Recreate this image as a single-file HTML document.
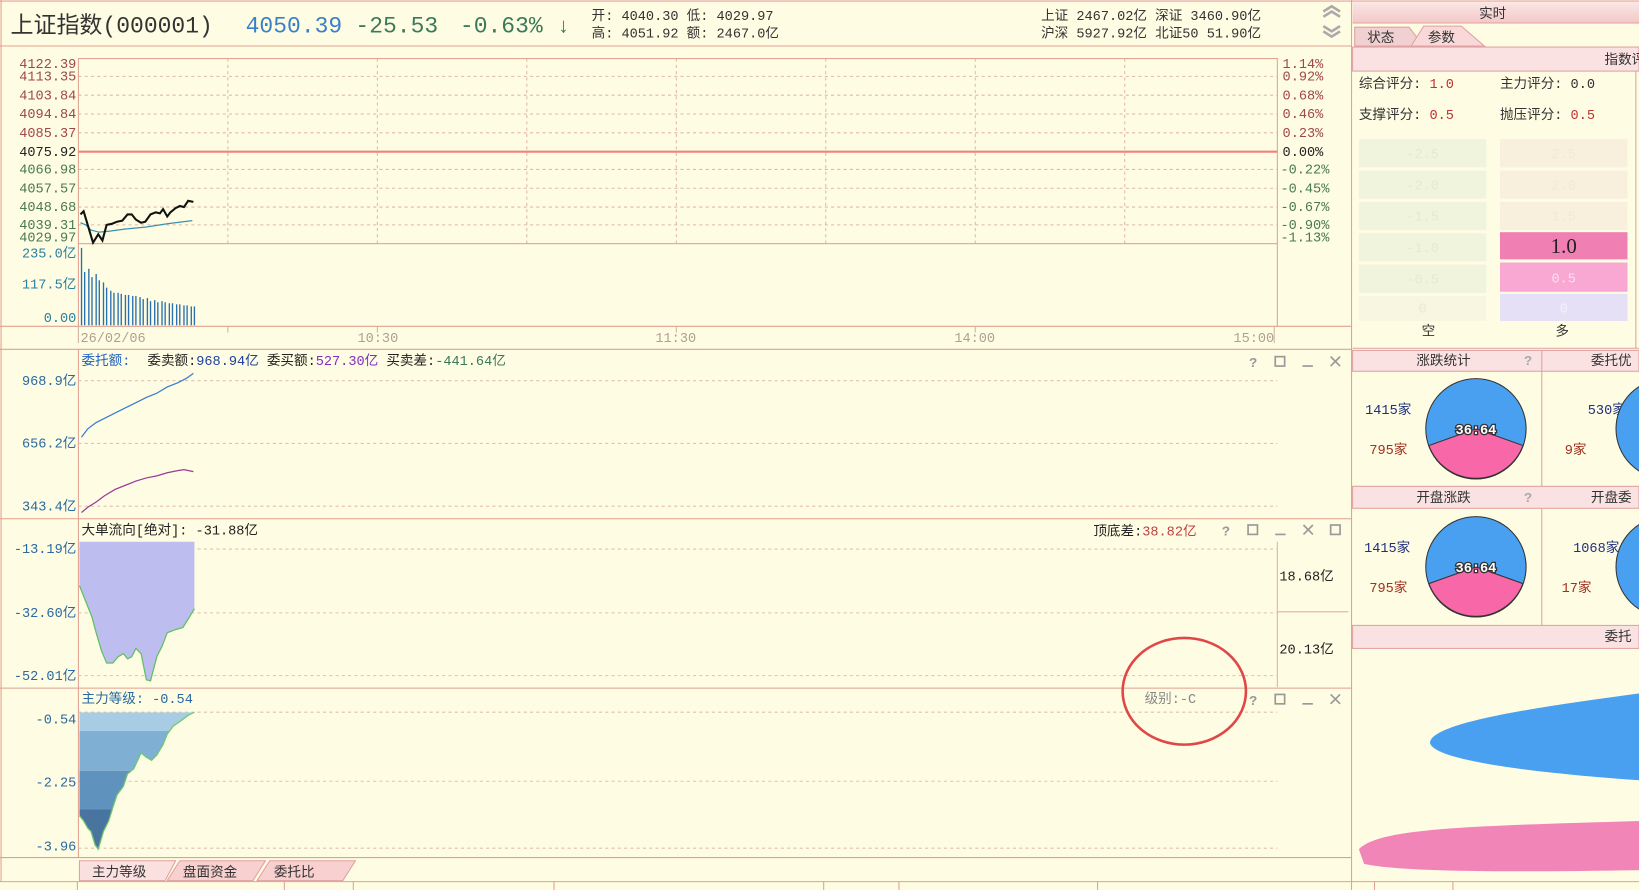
<!DOCTYPE html>
<html><head><meta charset="utf-8"><style>
html,body{margin:0;padding:0;background:#fefde3;overflow:hidden}
svg{display:block}
text{font-family:"Liberation Mono","Noto Sans CJK SC",monospace;font-size:13px}
.cn{font-family:"Liberation Mono","Noto Sans CJK SC",monospace}
</style></head><body>
<svg width="1639" height="890" viewBox="0 0 1568 851" preserveAspectRatio="none" xmlns="http://www.w3.org/2000/svg">
<rect width="1568" height="851" fill="#fefde3"/>
<defs>
<linearGradient id="pk" x1="0" y1="0" x2="0" y2="1"><stop offset="0" stop-color="#fbe6e6"/><stop offset="1" stop-color="#f3c8c8"/></linearGradient>
</defs>
<line x1="0" y1="1" x2="1568" y2="1" stroke="#e8a0a0"/>
<line x1="0" y1="44" x2="1293" y2="44" stroke="#e0a090"/>
<text x="10" y="31" class="cn" style="font-size:22px" fill="#333">上证指数(000001)</text>
<text x="235" y="31" style="font-size:22px" fill="#3a80c8">4050.39</text>
<text x="340" y="31" style="font-size:22px" fill="#3a7a5a">-25.53</text>
<text x="440" y="31" style="font-size:22px" fill="#3a7a5a">-0.63%</text>
<text x="533" y="31" style="font-size:20px" fill="#3a7a5a">↓</text>
<text x="566" y="19" class="cn" fill="#333">开: 4040.30  低: 4029.97</text>
<text x="566" y="36" class="cn" fill="#333">高: 4051.92  额: 2467.0亿</text>
<text x="996" y="19" class="cn" fill="#333">上证 2467.02亿  深证 3460.90亿</text>
<text x="996" y="36" class="cn" fill="#333">沪深 5927.92亿  北证50 51.90亿</text>
<path d="M1266 11l8-5 8 5M1266 16l8-5 8 5" stroke="#aaa" stroke-width="2.5" fill="none"/>
<path d="M1266 25l8 5 8-5M1266 30l8 5 8-5" stroke="#aaa" stroke-width="2.5" fill="none"/>
<line x1="1" y1="0" x2="1" y2="843" stroke="#e0a090"/>
<line x1="1293" y1="0" x2="1293" y2="851" stroke="#e0a090"/>
<g stroke="#e0b8a8" stroke-dasharray="3,3" stroke-width="1">
<line x1="75" y1="73" x2="1222" y2="73"/><line x1="75" y1="91" x2="1222" y2="91"/><line x1="75" y1="109" x2="1222" y2="109"/><line x1="75" y1="127" x2="1222" y2="127"/><line x1="75" y1="162" x2="1222" y2="162"/><line x1="75" y1="180" x2="1222" y2="180"/><line x1="75" y1="198" x2="1222" y2="198"/><line x1="75" y1="215" x2="1222" y2="215"/>
<line x1="218" y1="56" x2="218" y2="233"/><line x1="361" y1="56" x2="361" y2="233"/><line x1="504" y1="56" x2="504" y2="233"/><line x1="647" y1="56" x2="647" y2="233"/><line x1="790" y1="56" x2="790" y2="233"/><line x1="933" y1="56" x2="933" y2="233"/><line x1="1076" y1="56" x2="1076" y2="233"/>
</g>
<rect x="75" y="56" width="1147" height="177" fill="none" stroke="#e0a090"/>
<line x1="75" y1="145" x2="1222" y2="145" stroke="#f08080" stroke-width="2"/>
<line x1="75" y1="233" x2="75" y2="312" stroke="#e0a090"/>
<line x1="1222" y1="233" x2="1222" y2="312" stroke="#e0a090"/>
<g style="font-size:12px" text-anchor="end">
<text x="73" y="65" fill="#a04848">4122.39</text><text x="73" y="77" fill="#a04848">4113.35</text><text x="73" y="95" fill="#a04848">4103.84</text><text x="73" y="113" fill="#a04848">4094.84</text><text x="73" y="131" fill="#a04848">4085.37</text><text x="73" y="149" fill="#222">4075.92</text><text x="73" y="166" fill="#4a7a50">4066.98</text><text x="73" y="184" fill="#4a7a50">4057.57</text><text x="73" y="202" fill="#4a7a50">4048.68</text><text x="73" y="219" fill="#4a7a50">4039.31</text><text x="73" y="231" fill="#4a7a50">4029.97</text>
<text x="73" y="246" fill="#2a80a0">235.0亿</text><text x="73" y="276" fill="#2a80a0">117.5亿</text><text x="73" y="308" fill="#2a80a0">0.00</text>
</g>
<g style="font-size:12px">
<text x="1227" y="65" fill="#a04848">1.14%</text><text x="1227" y="77" fill="#a04848">0.92%</text><text x="1227" y="95" fill="#a04848">0.68%</text><text x="1227" y="113" fill="#a04848">0.46%</text><text x="1227" y="131" fill="#a04848">0.23%</text><text x="1227" y="149" fill="#222">0.00%</text><text x="1225" y="166" fill="#4a7a50">-0.22%</text><text x="1225" y="184" fill="#4a7a50">-0.45%</text><text x="1225" y="202" fill="#4a7a50">-0.67%</text><text x="1225" y="219" fill="#4a7a50">-0.90%</text><text x="1225" y="231" fill="#4a7a50">-1.13%</text>
</g>
<polyline points="77,213 82,215 87,220 95,222 105,221 120,219 140,217 160,214 184,211" fill="none" stroke="#3a90b0" stroke-width="1.2"/>
<polyline points="77,205 80,202 86,222 89,232 94,224 98,230 102,215 107,214 112,212 117,211 122,205 126,205 130,210 135,213 139,212 144,205 149,203 153,204 156,200 160,207 163,203 168,199 172,197 176,198 180,192 185,193" fill="none" stroke="#111" stroke-width="2"/>
<g stroke="#2a70b0" stroke-width="1.3">
<line x1="78" y1="311" x2="78" y2="237"/><line x1="81" y1="311" x2="81" y2="260"/><line x1="85" y1="311" x2="85" y2="257"/><line x1="88" y1="311" x2="88" y2="265"/><line x1="92" y1="311" x2="92" y2="262"/><line x1="95" y1="311" x2="95" y2="268"/><line x1="99" y1="311" x2="99" y2="270"/><line x1="102" y1="311" x2="102" y2="275"/><line x1="106" y1="311" x2="106" y2="278"/><line x1="109" y1="311" x2="109" y2="280"/><line x1="113" y1="311" x2="113" y2="280"/><line x1="116" y1="311" x2="116" y2="281"/><line x1="120" y1="311" x2="120" y2="282"/><line x1="123" y1="311" x2="123" y2="282"/><line x1="127" y1="311" x2="127" y2="283"/><line x1="130" y1="311" x2="130" y2="283"/><line x1="134" y1="311" x2="134" y2="284"/><line x1="137" y1="311" x2="137" y2="286"/><line x1="141" y1="311" x2="141" y2="285"/><line x1="144" y1="311" x2="144" y2="288"/><line x1="148" y1="311" x2="148" y2="287"/><line x1="151" y1="311" x2="151" y2="289"/><line x1="155" y1="311" x2="155" y2="288"/><line x1="158" y1="311" x2="158" y2="289"/><line x1="162" y1="311" x2="162" y2="290"/><line x1="165" y1="311" x2="165" y2="290"/><line x1="169" y1="311" x2="169" y2="291"/><line x1="172" y1="311" x2="172" y2="291"/><line x1="176" y1="311" x2="176" y2="292"/><line x1="179" y1="311" x2="179" y2="292"/><line x1="183" y1="311" x2="183" y2="293"/><line x1="186" y1="311" x2="186" y2="293"/>
</g>
<line x1="0" y1="312" x2="1293" y2="312" stroke="#e0a090"/>
<g stroke="#d0b0a0"><line x1="75" y1="312" x2="75" y2="328"/><line x1="218" y1="312" x2="218" y2="318"/><line x1="361" y1="312" x2="361" y2="318"/><line x1="647" y1="312" x2="647" y2="318"/><line x1="933" y1="312" x2="933" y2="318"/><line x1="1219" y1="312" x2="1219" y2="328"/></g>
<g style="font-size:12px" fill="#b0a090"><text x="77" y="327">26/02/06</text><text x="342" y="327">10:30</text><text x="627" y="327">11:30</text><text x="913" y="327">14:00</text><text x="1180" y="327">15:00</text></g>
<line x1="0" y1="334" x2="1293" y2="334" stroke="#e0a090"/>
<line x1="75" y1="334" x2="75" y2="820" stroke="#e0a090"/>
<g stroke="#e0c0b0" stroke-dasharray="3,3"><line x1="75" y1="364" x2="1222" y2="364"/><line x1="75" y1="424" x2="1222" y2="424"/><line x1="75" y1="484" x2="1222" y2="484"/></g>
<text x="78" y="349" class="cn" fill="#2060c0">委托额:</text>
<text x="141" y="349" class="cn" fill="#222">委卖额:<tspan fill="#2040a0">968.94亿</tspan> 委买额:<tspan fill="#8030c0">527.30亿</tspan> 买卖差:<tspan fill="#3a7a5a">-441.64亿</tspan></text>
<g style="font-size:12px" text-anchor="end" fill="#2a6aa0"><text x="73" y="368">968.9亿</text><text x="73" y="428">656.2亿</text><text x="73" y="488">343.4亿</text></g>
<polyline points="78,418 84,410 92,404 100,400 110,395 120,390 130,385 140,380 150,376 160,370 170,366 178,362 185,357" fill="none" stroke="#3a7ad0" stroke-width="1.2"/>
<polyline points="78,490 84,485 92,480 100,474 110,468 120,464 130,460 140,457 150,455 160,452 170,450 176,449 185,451" fill="none" stroke="#9a3a9a" stroke-width="1.2"/>
<line x1="0" y1="496" x2="1293" y2="496" stroke="#e0a090"/>
<g fill="none" stroke="#999" stroke-width="1.6">
<text x="1195" y="351" fill="#999" stroke="none" style="font-size:13px;font-weight:bold">?</text>
<rect x="1220" y="341" width="9" height="9"/><line x1="1246" y1="350" x2="1256" y2="350"/><path d="M1273 341l9 9M1282 341l-9 9"/>
<text x="1169" y="512" fill="#999" stroke="none" style="font-size:13px;font-weight:bold">?</text>
<rect x="1194" y="502" width="9" height="9"/><line x1="1220" y1="511" x2="1230" y2="511"/><path d="M1247 502l9 9M1256 502l-9 9"/><rect x="1273" y="502" width="9" height="9"/>
<text x="1195" y="674" fill="#999" stroke="none" style="font-size:13px;font-weight:bold">?</text>
<rect x="1220" y="664" width="9" height="9"/><line x1="1246" y1="673" x2="1256" y2="673"/><path d="M1273 664l9 9M1282 664l-9 9"/>
</g>
<g stroke="#e0c0b0" stroke-dasharray="3,3"><line x1="75" y1="525" x2="1222" y2="525"/><line x1="75" y1="586" x2="1222" y2="586"/><line x1="75" y1="646" x2="1222" y2="646"/></g>
<text x="78" y="511" class="cn" fill="#222">大单流向[绝对]: -31.88亿</text>
<text x="1046" y="512" class="cn" fill="#222">顶底差:<tspan fill="#c04040">38.82亿</tspan></text>
<line x1="1222" y1="518" x2="1222" y2="657" stroke="#e0b0a0"/>
<line x1="1222" y1="585" x2="1290" y2="585" stroke="#e0b0a0"/>
<text x="1224" y="555" class="cn" fill="#222">18.68亿</text>
<text x="1224" y="625" class="cn" fill="#222">20.13亿</text>
<g style="font-size:12px" text-anchor="end" fill="#2a6aa0"><text x="73" y="529">-13.19亿</text><text x="73" y="590">-32.60亿</text><text x="73" y="650">-52.01亿</text></g>
<path d="M76 518 L186 518 L186 582 L180 592 L175 600 L168 602 L160 605 L155 618 L150 628 L144 651 L140 650 L135 625 L130 620 L126 628 L122 630 L118 625 L113 628 L108 634 L102 634 L97 622 L92 605 L88 590 L84 580 L80 570 L76 560 Z" fill="#bdbdf0" stroke="none"/>
<path d="M186 582 L180 592 L175 600 L168 602 L160 605 L155 618 L150 628 L144 651 L140 650 L135 625 L130 620 L126 628 L122 630 L118 625 L113 628 L108 634 L102 634 L97 622 L92 605 L88 590 L84 580 L80 570 L76 560" fill="none" stroke="#60c060" stroke-width="1.2"/>
<line x1="0" y1="658" x2="1293" y2="658" stroke="#e0a090"/>
<g stroke="#e0c0b0" stroke-dasharray="3,3"><line x1="75" y1="681" x2="1222" y2="681"/><line x1="75" y1="747" x2="1222" y2="747"/><line x1="75" y1="811" x2="1222" y2="811"/></g>
<text x="78" y="672" class="cn" fill="#2a6aa0">主力等级: -0.54</text>
<text x="1095" y="672" class="cn" fill="#888">级别:-C</text>
<g style="font-size:12px" text-anchor="end" fill="#2a6aa0"><text x="73" y="692">-0.54</text><text x="73" y="752">-2.25</text><text x="73" y="813">-3.96</text></g>
<clipPath id="c4"><path d="M76 681 L186 681 L180 684 L172 690 L166 694 L160 702 L156 712 L150 722 L145 727 L140 724 L135 720 L128 735 L122 740 L118 752 L112 760 L108 772 L104 785 L99 795 L94 812 L91 808 L87 795 L84 792 L80 785 L76 780 Z"/></clipPath>
<g clip-path="url(#c4)">
<rect x="75" y="681" width="112" height="18" fill="#a8cce4"/>
<rect x="75" y="699" width="112" height="38" fill="#7fb0d4"/>
<rect x="75" y="737" width="112" height="37" fill="#5f92bc"/>
<rect x="75" y="774" width="112" height="40" fill="#4a74a0"/>
</g>
<path d="M186 681 L180 684 L172 690 L166 694 L160 702 L156 712 L150 722 L145 727 L140 724 L135 720 L128 735 L122 740 L118 752 L112 760 L108 772 L104 785 L99 795 L94 812 L91 808 L87 795 L84 792 L80 785 L76 780" fill="none" stroke="#70c870" stroke-width="1.2"/>
<ellipse cx="1133" cy="661" rx="59" ry="51" fill="none" stroke="#e04848" stroke-width="2.5"/>
<line x1="0" y1="820" x2="1293" y2="820" stroke="#e0a090"/>
<path d="M76 842 L76 823 L168 823 L158 842 Z" fill="#fbe0e0" stroke="#e0a0a0"/>
<path d="M160 842 L172 823 L254 823 L242 842 Z" fill="#f8d0d0" stroke="#e0a0a0"/>
<path d="M246 842 L258 823 L340 823 L328 842 Z" fill="#f8d0d0" stroke="#e0a0a0"/>
<text x="88" y="838" class="cn" fill="#333">主力等级</text>
<text x="175" y="838" class="cn" fill="#333">盘面资金</text>
<text x="262" y="838" class="cn" fill="#333">委托比</text>
<line x1="0" y1="843" x2="1568" y2="843" stroke="#e0a090"/>
<g stroke="#e0a090"><line x1="74" y1="843" x2="74" y2="851"/><line x1="272" y1="843" x2="272" y2="851"/><line x1="338" y1="843" x2="338" y2="851"/><line x1="530" y1="843" x2="530" y2="851"/><line x1="788" y1="843" x2="788" y2="851"/><line x1="860" y1="843" x2="860" y2="851"/><line x1="1050" y1="843" x2="1050" y2="851"/><line x1="1315" y1="843" x2="1315" y2="851"/><line x1="1390" y1="843" x2="1390" y2="851"/></g>
<rect x="1294" y="2" width="274" height="20" fill="url(#pk)"/>
<text x="1415" y="17" class="cn" fill="#333">实时</text>
<line x1="1294" y1="22" x2="1568" y2="22" stroke="#e0a0a0"/>
<path d="M1296 44 L1296 26 L1348 26 L1362 44 Z" fill="#f0d0d0" stroke="#e0a0a0"/>
<path d="M1350 44 L1362 25 L1398 25 L1420 44 Z" fill="#f8d8d8" stroke="#e0a0a0"/>
<text x="1308" y="40" class="cn" fill="#333">状态</text>
<text x="1366" y="40" class="cn" fill="#333">参数</text>
<rect x="1294" y="45" width="274" height="23" fill="#fbe2e2" stroke="#e0a0a0"/>
<text x="1535" y="61" class="cn" fill="#333">指数评</text>
<line x1="1565" y1="68" x2="1565" y2="333" stroke="#e0a0a0"/>
<text x="1300" y="84" class="cn" fill="#333">综合评分: <tspan fill="#c03030">1.0</tspan></text>
<text x="1435" y="84" class="cn" fill="#333">主力评分:  <tspan fill="#333">0.0</tspan></text>
<text x="1300" y="114" class="cn" fill="#333">支撑评分: <tspan fill="#c03030">0.5</tspan></text>
<text x="1435" y="114" class="cn" fill="#333">抛压评分:  <tspan fill="#c03030">0.5</tspan></text>
<g fill="#f0f4dc"><rect x="1300" y="133" width="122" height="27"/><rect x="1300" y="163" width="122" height="27"/><rect x="1300" y="193" width="122" height="27"/><rect x="1300" y="223" width="122" height="27"/><rect x="1300" y="253" width="122" height="27"/><rect x="1300" y="283" width="122" height="24" fill="#f8f6e0"/></g>
<g fill="#f8f0dc"><rect x="1435" y="133" width="122" height="27"/><rect x="1435" y="163" width="122" height="27"/><rect x="1435" y="193" width="122" height="27"/></g>
<rect x="1435" y="222" width="122" height="26" fill="#f080b4"/>
<rect x="1435" y="251" width="122" height="28" fill="#f8a8d2"/>
<rect x="1435" y="281" width="122" height="26" fill="#e6e0f6"/>
<g style="font-size:13px" fill="#e4ead0" text-anchor="middle"><text x="1361" y="151">-2.5</text><text x="1361" y="181">-2.0</text><text x="1361" y="211">-1.5</text><text x="1361" y="241">-1.0</text><text x="1361" y="271">-0.5</text><text x="1361" y="299">0</text></g>
<g style="font-size:13px" fill="#f4e8d0" text-anchor="middle"><text x="1496" y="151">2.5</text><text x="1496" y="181">2.0</text><text x="1496" y="211">1.5</text></g>
<text x="1496" y="242" text-anchor="middle" style="font-size:20px;font-family:'Liberation Serif',serif" fill="#222">1.0</text>
<text x="1496" y="270" text-anchor="middle" fill="#fce0ee">0.5</text>
<text x="1496" y="299" text-anchor="middle" fill="#f4f0fc">0</text>
<text x="1360" y="321" class="cn" fill="#333">空</text>
<text x="1488" y="321" class="cn" fill="#333">多</text>
<line x1="1294" y1="333" x2="1568" y2="333" stroke="#e0a0a0"/>
<rect x="1294" y="335" width="274" height="20" fill="#fbe2e2" stroke="#e0a0a0"/>
<line x1="1475" y1="335" x2="1475" y2="598" stroke="#e0a0a0"/>
<text x="1355" y="349" class="cn" fill="#333">涨跌统计</text>
<text x="1458" y="349" fill="#aaa" style="font-weight:bold">?</text>
<text x="1522" y="349" class="cn" fill="#333">委托优</text>
<text x="1306" y="396" class="cn" fill="#203080">1415家</text>
<text x="1310" y="434" class="cn" fill="#a03020">795家</text>
<text x="1519" y="396" class="cn" fill="#203080">530家</text>
<text x="1497" y="434" class="cn" fill="#a03020">9家</text>
<circle cx="1412" cy="410" r="48" fill="#4aa0f0" stroke="#333"/>
<path d="M1412 410 L1367 426 A48 48 0 0 0 1457 426 Z" fill="#f868a8" stroke="#333"/>
<text x="1412" y="415" text-anchor="middle" style="font-size:13px;font-weight:bold" fill="#fff" stroke="#333" stroke-width="2.5" paint-order="stroke">36:64</text>
<circle cx="1594" cy="410" r="48" fill="#4aa0f0" stroke="#333"/>
<rect x="1294" y="465" width="274" height="21" fill="#fbe2e2" stroke="#e0a0a0"/>
<text x="1355" y="480" class="cn" fill="#333">开盘涨跌</text>
<text x="1458" y="480" fill="#aaa" style="font-weight:bold">?</text>
<text x="1522" y="480" class="cn" fill="#333">开盘委</text>
<text x="1305" y="528" class="cn" fill="#203080">1415家</text>
<text x="1310" y="566" class="cn" fill="#a03020">795家</text>
<text x="1505" y="528" class="cn" fill="#203080">1068家</text>
<text x="1494" y="566" class="cn" fill="#a03020">17家</text>
<circle cx="1412" cy="542" r="48" fill="#4aa0f0" stroke="#333"/>
<path d="M1412 542 L1367 558 A48 48 0 0 0 1457 558 Z" fill="#f868a8" stroke="#333"/>
<text x="1412" y="547" text-anchor="middle" style="font-size:13px;font-weight:bold" fill="#fff" stroke="#333" stroke-width="2.5" paint-order="stroke">36:64</text>
<circle cx="1594" cy="542" r="48" fill="#4aa0f0" stroke="#333"/>
<rect x="1294" y="598" width="274" height="22" fill="#fbe2e2" stroke="#e0a0a0"/>
<text x="1535" y="613" class="cn" fill="#333">委托</text>
<path d="M1568 663 C1480 675 1370 690 1368 710 C1370 728 1480 740 1568 746 Z" fill="#4aa0f0"/>
<path d="M1300 812 C1320 792 1400 790 1568 785 L1568 832 C1450 834 1340 834 1305 826 Z" fill="#f070b0" opacity="0.85"/>
</svg>
</body></html>
